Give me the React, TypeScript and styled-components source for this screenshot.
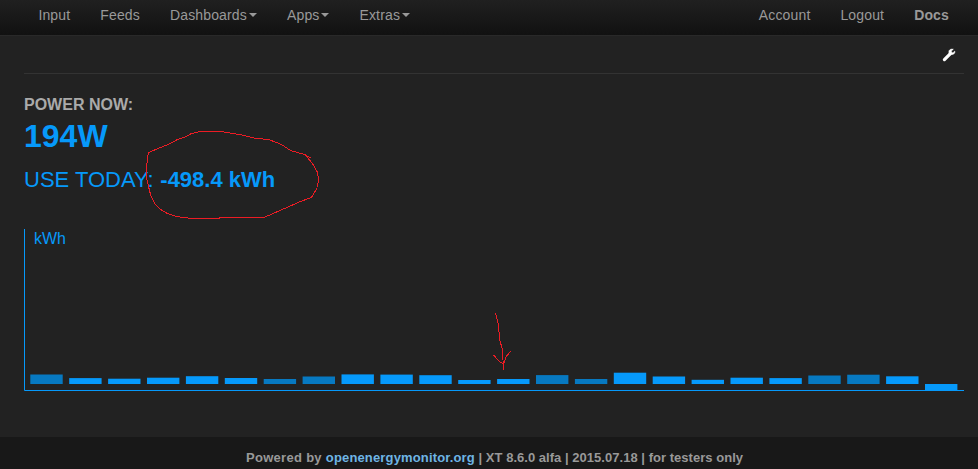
import React from "react";
import styled, { createGlobalStyle } from "styled-components";

const GlobalStyle = createGlobalStyle`
  * { box-sizing: border-box; }
  body {
    margin: 0;
    background: #222;
    color: #aaa;
    font-family: "Liberation Sans", Arial, sans-serif;
    overflow: hidden;
  }
`;

const Page = styled.div`
  position: relative;
  display: flex;
  flex-direction: column;
  height: 469px;
`;

const Navbar = styled.nav`
  display: flex;
  justify-content: space-between;
  height: 35px;
  padding: 0 14px 0 23.4px;
  background: linear-gradient(#202020, #111);
  box-shadow: 0 1px 0 #292929;
`;

const NavGroup = styled.div`
  display: flex;
`;

const NavItem = styled.a<{ $bold?: boolean }>`
  display: flex;
  align-items: center;
  height: 30px;
  padding: 0 15px;
  font-size: 14px;
  line-height: 20px;
  letter-spacing: 0.15px;
  color: #999;
  font-weight: ${(p) => (p.$bold ? 700 : 400)};
`;

const Caret = styled.span`
  margin: 0 0 0 2px;
  border: 4px solid transparent;
  border-top-color: #999;
  border-bottom: 0;
`;

const Content = styled.main`
  flex: 1;
  padding: 0 14px 0 24px;
`;

const Toolbar = styled.div`
  display: flex;
  justify-content: flex-end;
  height: 39px;
  padding: 13px 8px 0 0;
  border-bottom: 1px solid #333;
`;

const PowerLabel = styled.div`
  margin-top: 21px;
  font-size: 16px;
  line-height: 20px;
  font-weight: 700;
`;

const PowerValue = styled.div`
  margin-top: 1px;
  font-size: 32px;
  line-height: 40px;
  font-weight: 700;
  color: #0699fa;
`;

const UseToday = styled.div`
  margin-top: 9px;
  font-size: 22px;
  line-height: 30px;
  color: #0699fa;

  b {
    margin-left: 0.6px;
  }
`;

const Chart = styled.svg`
  display: block;
  margin-top: 34px;
`;

const ChartUnit = styled.text`
  font-size: 16px;
  fill: #0699fa;
`;

const Footer = styled.footer`
  height: 32px;
  padding: 11px 0 0 11px;
  background: #181818;
  text-align: center;
  font-size: 13px;
  line-height: 20px;
  font-weight: 700;
  letter-spacing: 0.03px;
  color: #999;
`;

const FooterLead = styled.span`
  letter-spacing: 0.3px;
`;

const FooterLink = styled.a`
  letter-spacing: 0.15px;
  color: #6eb5e5;
`;

const Markup = styled.svg`
  position: absolute;
  inset: 0;
  pointer-events: none;
`;

const leftNav = [
  { label: "Input" },
  { label: "Feeds" },
  { label: "Dashboards", menu: true },
  { label: "Apps", menu: true },
  { label: "Extras", menu: true },
];

const daily = [
  9.5, 5.9, 5.3, 6.3, 7.8, 6, 5, 7.5, 9.6, 9.4, 8.8, 4, 5, 8.9, 5, 11.3, 7.5,
  4.2, 6.3, 5.9, 8.5, 9.3, 7.7, -6,
];
const weekend = new Set([0, 6, 7, 13, 14, 20, 21]);

export default function App() {
  return (
    <>
      <GlobalStyle />
      <Page>
        <Navbar>
          <NavGroup>
            {leftNav.map((n) => (
              <NavItem key={n.label}>
                {n.label}
                {n.menu && <Caret />}
              </NavItem>
            ))}
          </NavGroup>
          <NavGroup>
            <NavItem>Account</NavItem>
            <NavItem>Logout</NavItem>
            <NavItem $bold>Docs</NavItem>
          </NavGroup>
        </Navbar>
        <Content>
          <Toolbar>
            <svg width="14" height="14" viewBox="0 0 14 14">
              <path
                d="M2.4 11.6 8.4 5.6"
                stroke="#fff"
                strokeWidth="3.2"
                strokeLinecap="round"
              />
              <path
                d="M11.4 1.2 9.4 3.1 9.7 4.4 11 4.7 12.9 3C13.4 5.2 11.7 6.9 9.4 6.6L7 6 6.8 4C6.6 2 8.7.4 11.4 1.2Z"
                fill="#fff"
                stroke="#fff"
                strokeWidth="0.4"
              />
            </svg>
          </Toolbar>
          <PowerLabel>POWER NOW:</PowerLabel>
          <PowerValue>194W</PowerValue>
          <UseToday>
            USE TODAY: <b>-498.4 kWh</b>
          </UseToday>
          <Chart width="940" height="162" viewBox="0 0 940 162">
            <path d="M.5 0V161.5H940" fill="none" stroke="#0699fa" />
            <ChartUnit x="10" y="15">
              kWh
            </ChartUnit>
            {daily.map((v, i) => (
              <rect
                key={i}
                x={6.3 + i * 38.9}
                y={v > 0 ? 155 - v : 155}
                width="32.4"
                height={Math.abs(v)}
                fill={weekend.has(i) ? "#0779c1" : "#0699fa"}
              />
            ))}
          </Chart>
        </Content>
        <Footer>
          <FooterLead>Powered by </FooterLead>
          <FooterLink>openenergymonitor.org</FooterLink> | XT 8.6.0 alfa |
          2015.07.18 | for testers only
        </Footer>
        <Markup
          width="978"
          height="469"
          fill="none"
          stroke="#ed1c24"
          shapeRendering="crispEdges"
        >
          <path d="M311.5 158.5 304.5 154.5 290.5 150.5 281.5 144.5 268.5 139.5 256.5 138.5 239.5 134.5 220.5 131.5H200.5L191.5 133.5 186.5 136.5 177.5 139.5 170.5 143.5 160.5 147.5 148.5 152.5 147.5 158.5 146.5 168.5V177.5L148.5 186.5 150.5 194.5 154.5 203.5 160.5 209.5 167.5 213.5 176.5 216.5 191.5 218.5H218.5L220.5 217.5H263.5L268.5 215.5 300.5 201.5 311.5 197.5 317.5 187.5 318.5 178.5 317.5 172.5 312.5 163.5 306.5 156.5" />
          <path d="M495.5 313 498.5 325 499.5 339 502.5 350 503.5 370M493.5 355 499.5 361.5 503.5 364 506.5 356 511 351" />
        </Markup>
      </Page>
    </>
  );
}
